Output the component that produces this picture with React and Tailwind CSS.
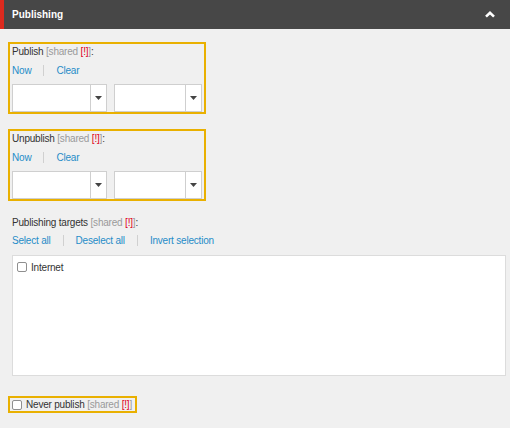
import React from 'react';

function Shared() {
  return (
    <>
      {' '}
      <span className="text-[#9a9a9a]">[shared </span>
      <span className="text-[#e0001b]">[!]</span>
      <span className="text-[#9a9a9a]">]</span>
    </>
  );
}

function Caret() {
  return (
    <svg width="7" height="4" viewBox="0 0 7 4">
      <path d="M0 0h7L3.5 4z" fill="#444" />
    </svg>
  );
}

function DropDown({ width }) {
  return (
    <div className="flex h-[28px]" style={{ width }}>
      <div className="flex-1 bg-white border border-[#cfcfcf]" />
      <div className="w-[16px] bg-white border border-l-0 border-[#cfcfcf] flex items-center justify-center">
        <Caret />
      </div>
    </div>
  );
}

function LinkRow({ items }) {
  return (
    <div className="flex items-center h-[14px] text-[#1f8cc8]">
      {items.map((item, i) => (
        <React.Fragment key={item}>
          {i > 0 && <span className="w-px h-[11px] bg-[#d0d0d0] mx-[12px]" />}
          <span>{item}</span>
        </React.Fragment>
      ))}
    </div>
  );
}

function DateBox({ label, top }) {
  return (
    <div className={`w-[198px] border-2 border-[#e9b000] px-[2px] pt-[1px] ${top}`}>
      <div className="h-[14px] leading-[14px] text-[#333]">
        {label}
        <Shared />
        <span>:</span>
      </div>
      <div className="mt-[4px]">
        <LinkRow items={['Now', 'Clear']} />
      </div>
      <div className="flex gap-[7px] mt-[7px]">
        <DropDown width="95px" />
        <DropDown width="88px" />
      </div>
    </div>
  );
}

export default function App() {
  return (
    <div
      className="w-[510px] h-[428px] bg-[#f0f0f0] text-[10px] tracking-[-0.2px] overflow-hidden"
      style={{ fontFamily: '"Liberation Sans", Arial, sans-serif' }}
    >
      {/* Header */}
      <div className="h-[29px] bg-[#474747] border-l-4 border-[#dc2a1e] flex items-center justify-between pl-[8px] pr-[15px]">
        <span className="text-white font-bold text-[10px] tracking-normal">Publishing</span>
        <svg width="10" height="7" viewBox="0 0 10 7">
          <path d="M1 5.6L5 1.8L9 5.6" stroke="#fff" strokeWidth="2.6" fill="none" />
        </svg>
      </div>

      <div className="px-2 pt-[13px]">
        <DateBox label="Publish" top="" />
        <DateBox label="Unpublish" top="mt-[15px]" />

        <div className="pl-1 mt-[15px]">
          <div className="h-[14px] leading-[14px] text-[#333]">
            Publishing targets
            <Shared />
            <span>:</span>
          </div>
          <div className="mt-[3px]">
            <LinkRow items={['Select all', 'Deselect all', 'Invert selection']} />
          </div>
          <div className="mt-[8px] w-[494px] h-[121px] bg-white border border-[#dcdcdc] px-[4px] pt-[4px]">
            <div className="flex items-center gap-[4px] h-[14px] text-[#333]">
              <span className="w-[10px] h-[10px] border border-[#8f8f8f] rounded-[2px] bg-white" />
              <span>Internet</span>
            </div>
          </div>
        </div>

        <div className="mt-[20px] inline-flex items-center gap-[4px] h-[17px] border-2 border-[#e9b000] pl-[2px] pr-[3px] text-[#333]">
          <span className="w-[10px] h-[10px] border border-[#8f8f8f] rounded-[2px] bg-white" />
          <span>
            Never publish
            <Shared />
          </span>
        </div>
      </div>
    </div>
  );
}
